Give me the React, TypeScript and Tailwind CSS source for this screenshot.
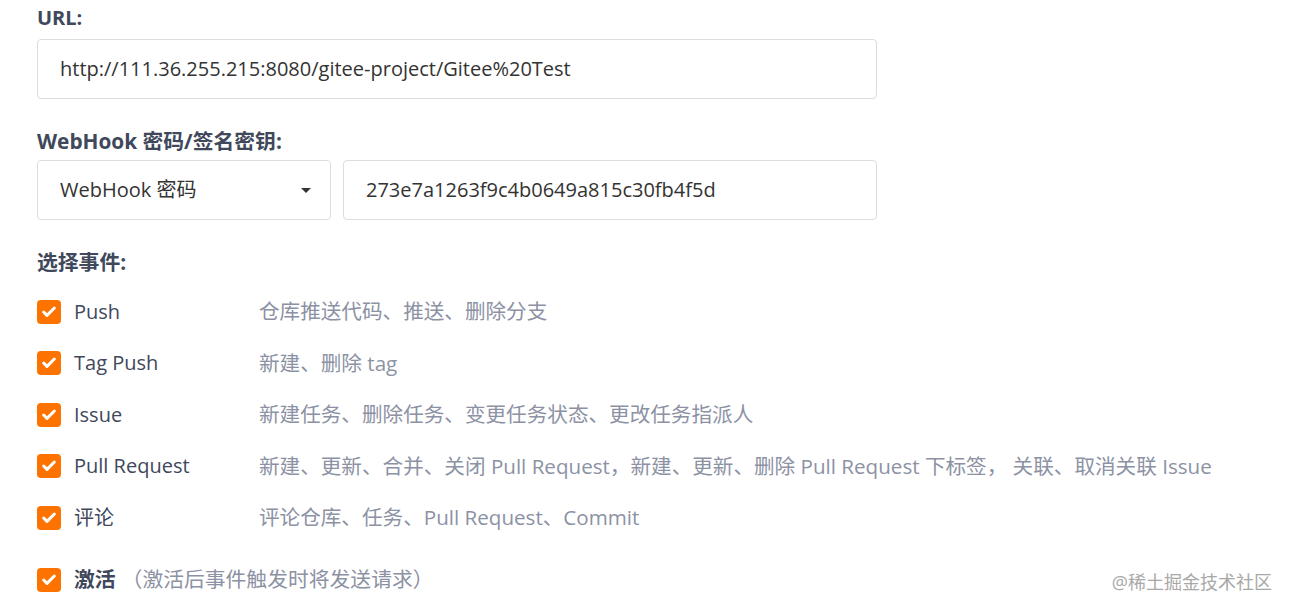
import { Check } from "lucide-react";

const font = "font-['Segoe_UI','Open_Sans','Noto_Sans_CJK_SC',sans-serif]";

const events = [
  { name: "Push", desc: "仓库推送代码、推送、删除分支" },
  { name: "Tag Push", desc: "新建、删除 tag" },
  { name: "Issue", desc: "新建任务、删除任务、变更任务状态、更改任务指派人" },
  {
    name: "Pull Request",
    desc: "新建、更新、合并、关闭 Pull Request，新建、更新、删除 Pull Request 下标签， 关联、取消关联 Issue",
  },
  { name: "评论", desc: "评论仓库、任务、Pull Request、Commit" },
];

function Box() {
  return (
    <span className="flex h-6 w-6 shrink-0 items-center justify-center rounded-[4px] bg-[#fe7300]">
      <Check className="h-4 w-4 text-white" strokeWidth={4.5} />
    </span>
  );
}

export default function App() {
  return (
    <div className={`relative h-[613px] w-[1291px] overflow-hidden bg-white ${font}`}>
      <div className="flex flex-col pl-[37px] pt-[6px]">
        <div className="text-[20px] font-bold leading-6 text-[#40485b]">URL:</div>
        <div className="mt-[9px] flex h-[60px] w-[840px] items-center rounded-[4px] border border-[#dcdde0] px-[22px] text-[20px] text-[#333]">
          http://111.36.255.215:8080/gitee-project/Gitee%20Test
        </div>

        <div className="mt-[30px] text-[20.8px] font-bold leading-6 text-[#40485b]">WebHook 密码/签名密钥:</div>
        <div className="mt-[7px] flex gap-3">
          <div className="flex h-[60px] w-[294px] items-center justify-between rounded-[4px] border border-[#dcdde0] pl-[22px] pr-[19px] text-[20px] text-[#333]">
            <span>WebHook 密码</span>
            <svg width="10" height="5" viewBox="0 0 10 5">
              <path d="M0 0h10L5 5z" fill="#333" />
            </svg>
          </div>
          <div className="flex h-[60px] w-[534px] items-center rounded-[4px] border border-[#dcdde0] px-[22px] text-[20px] text-[#333]">
            273e7a1263f9c4b0649a815c30fb4f5d
          </div>
        </div>

        <div className="mt-[30px] text-[20.8px] font-bold leading-6 text-[#40485b]">选择事件:</div>
        <div className="mt-[12px] flex flex-col">
          {events.map((e) => (
            <div key={e.name} className="flex h-[51.5px] items-center">
              <Box />
              <span className="ml-[13px] w-[185px] text-[20px] text-[#40485b]">{e.name}</span>
              <span className="text-[20.6px] text-[#8c92a4]">{e.desc}</span>
            </div>
          ))}
        </div>
        <div className="mt-[11px] flex h-[51px] items-center">
          <Box />
          <span className="ml-[13px] text-[20.8px] font-bold text-[#40485b]">激活</span>
          <span className="ml-[6px] text-[20.8px] text-[#8c92a4]">（激活后事件触发时将发送请求）</span>
        </div>
      </div>
      <div className="absolute bottom-[17px] right-[19px] text-[18px] text-[#a8a8a8]">@稀土掘金技术社区</div>
    </div>
  );
}
